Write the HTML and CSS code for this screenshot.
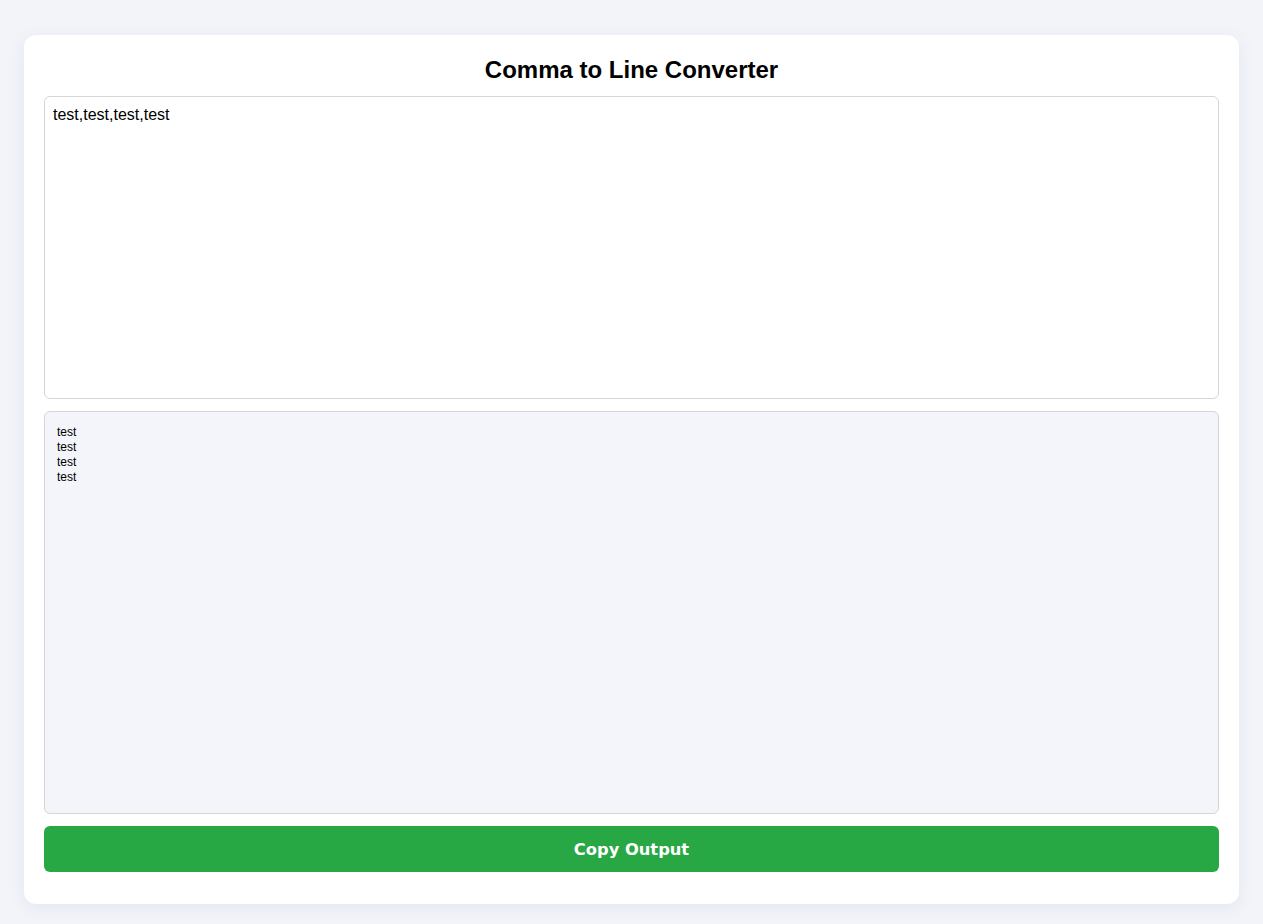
FILE: index.html
```html
<!DOCTYPE html>
<html lang="en">
<head>
<meta charset="utf-8">
<title>Comma to Line Converter</title>
<link rel="stylesheet" href="styles.css">
</head>
<body>
<div class="card">
  <h1 class="title">Comma to Line Converter</h1>
  <textarea class="input">test,test,test,test</textarea>
  <div class="output">test<br>test<br>test<br>test</div>
  <button class="copy">Copy Output</button>
</div>
</body>
</html>
```
FILE: styles.css
```css
html, body { margin: 0; padding: 0; }
body {
  background: #f3f4f9;
  font-family: "Liberation Sans", Arial, sans-serif;
  padding: 35px 24px 20px;
}
.card {
  background: #ffffff;
  border-radius: 12px;
  box-shadow: 0 4px 16px rgba(120, 130, 200, 0.12);
  padding: 20px 20px 32px;
  display: flex;
  flex-direction: column;
}
.title {
  margin: 0 0 11px;
  font-size: 24px;
  line-height: 30px;
  text-align: center;
  font-weight: bold;
  color: #000;
}
.input {
  box-sizing: border-box;
  width: 100%;
  height: 303px;
  border: 1px solid #d6d6d6;
  border-radius: 6px;
  padding: 9px 8px 8px;
  font-family: "Liberation Sans", Arial, sans-serif;
  font-size: 16px;
  color: #000;
  resize: none;
  margin: 0 0 12px;
  outline: none;
}
.output {
  box-sizing: border-box;
  height: 403px;
  border: 1px solid #d6d6d6;
  border-radius: 6px;
  background: #f3f5fa;
  padding: 13px 12px 12px;
  font-size: 12px;
  line-height: 15px;
  color: #000;
  margin-bottom: 12px;
}
.copy {
  height: 46px;
  border: none;
  border-radius: 6px;
  background: #28a745;
  color: #fff;
  font-family: "DejaVu Sans", Verdana, sans-serif;
  font-weight: bold;
  font-size: 16.3px;
}
```
